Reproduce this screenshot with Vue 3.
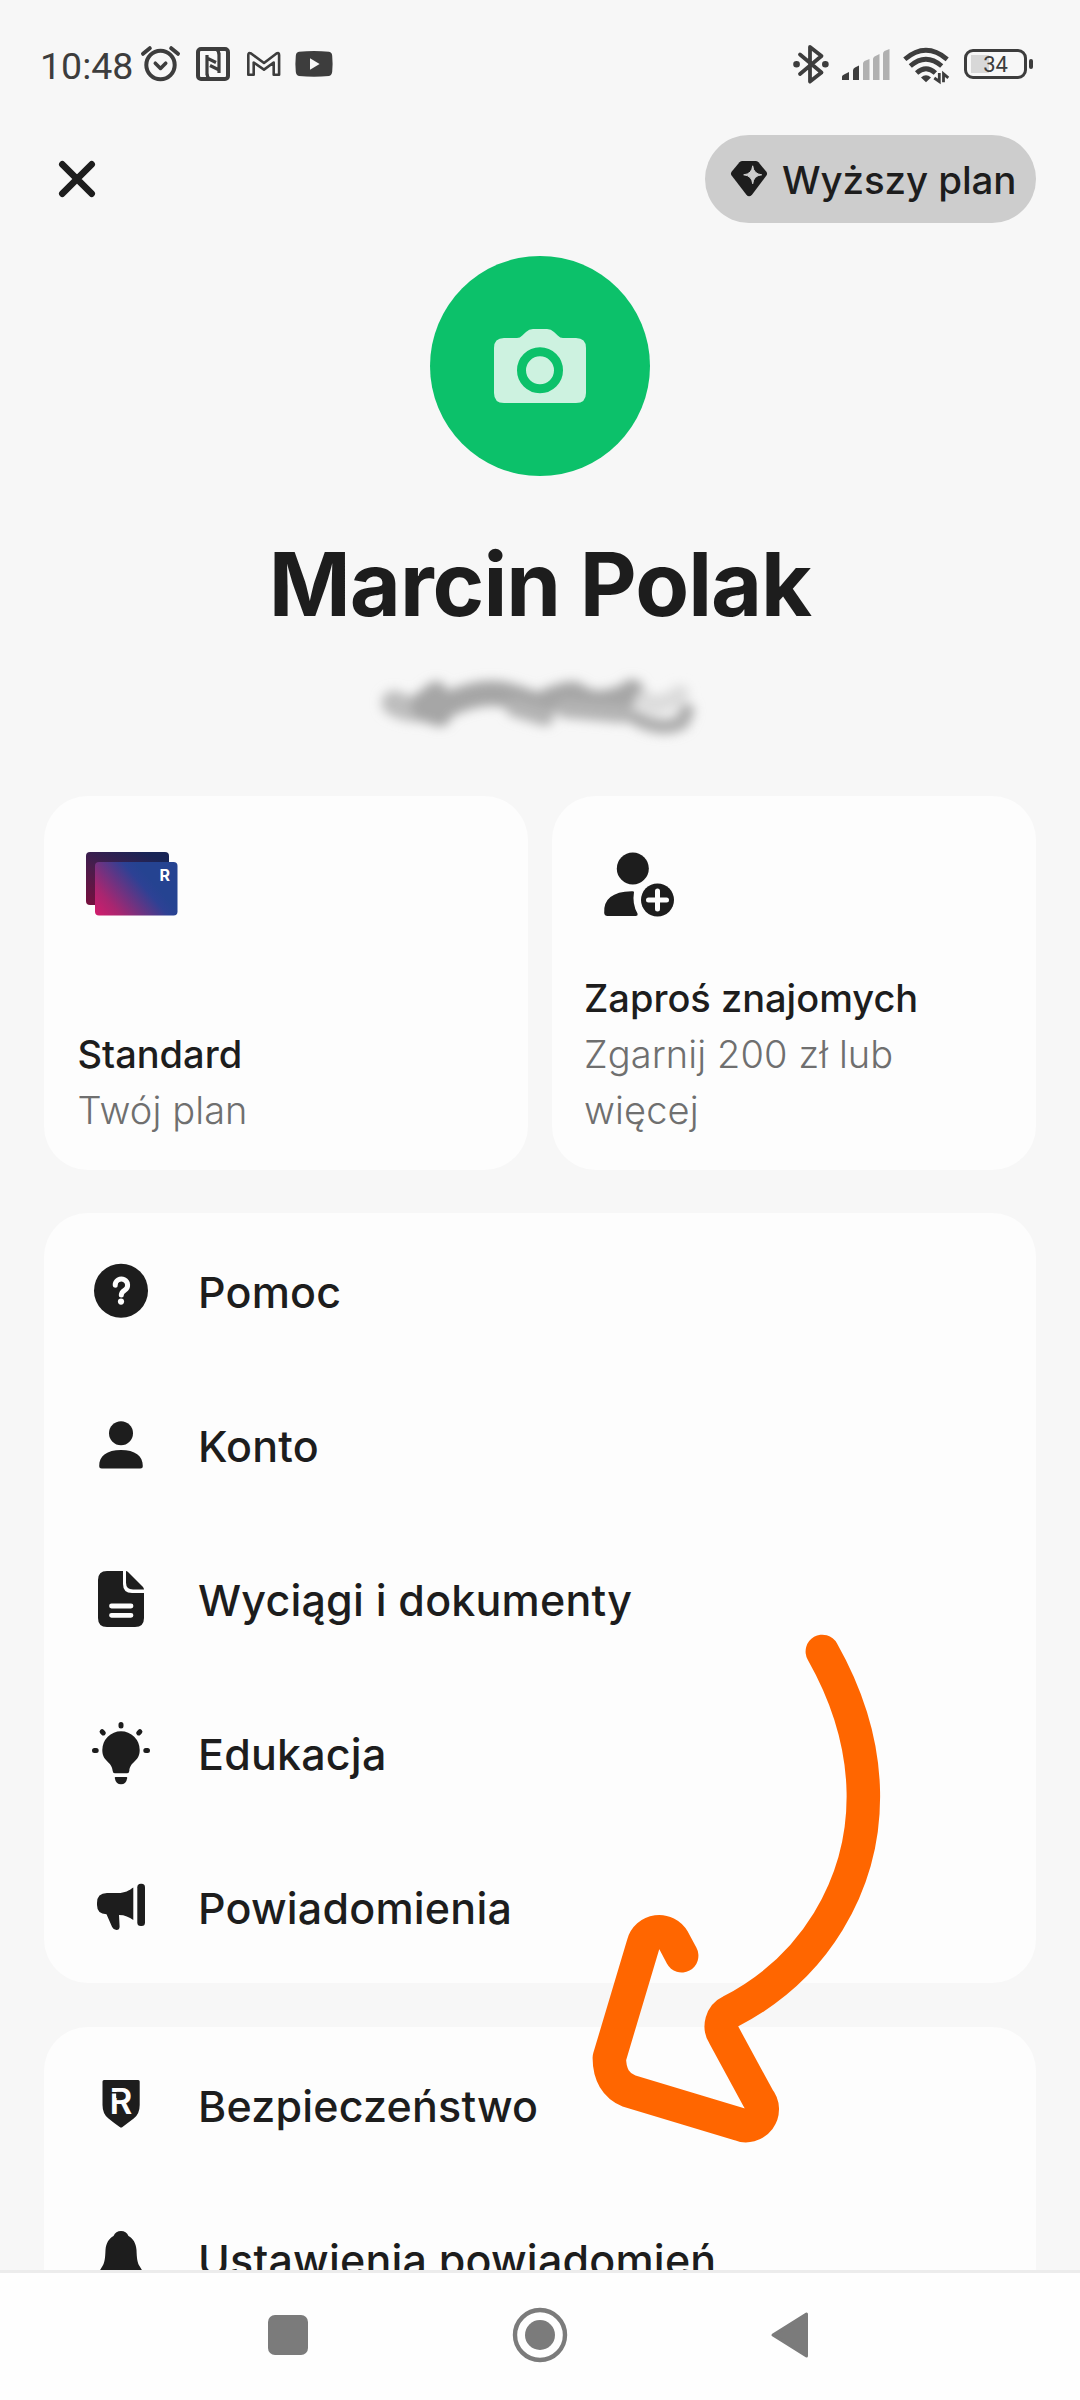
<script setup>
import { ref } from "vue";

const user = ref({ name: "Marcin Polak" });

const mainMenu = [
  { id: "help", label: "Pomoc" },
  { id: "account", label: "Konto" },
  { id: "documents", label: "Wyciągi i dokumenty" },
  { id: "education", label: "Edukacja" },
  { id: "news", label: "Powiadomienia" },
];

const settingsMenu = [
  { id: "security", label: "Bezpieczeństwo" },
  { id: "notifications", label: "Ustawienia powiadomień" },
];

const sections = ref([mainMenu, settingsMenu]);
</script>

<template>
  <div class="screen">
    <div class="status-bar">
      <span class="time">10:48</span>
      <svg class="status-left" width="196" height="44" viewBox="0 0 196 44" fill="none" stroke="#3d3d3d">
        <!-- alarm -->
        <circle cx="23.5" cy="24" r="14.2" stroke-width="4" />
        <path d="M18.3 22.2l5.2 5.2 5.2-5.2" stroke-width="3.6" stroke-linecap="round" stroke-linejoin="round" />
        <path d="M6 12.8l6.8-5.6M41 12.8l-6.8-5.6" stroke-width="4" stroke-linecap="round" />
        <!-- nfc -->
        <rect x="61" y="8" width="30" height="30" rx="3" stroke-width="4" />
        <path d="M70 14v18q0 4 2.500 6M82 32V14q0-4-2.500-6M70 34V17l9 4.500M82 12v17l-9-4.500" stroke-width="3.2" />
        <!-- gmail -->
        <path d="M111.3 33.7V14q0-3 2.800-1.500L127 22l12.500-9.500q2.600-1.500 2.600 1.500v19.700h-5.400V21.500L127 28.600l-10.300-7.100v12.200z" stroke-width="2.6" stroke-linejoin="round" />
        <!-- youtube -->
        <path d="M162 10.800q15-1.600 30 0 3 .6 3.200 4 .8 8 0 16-.3 3.600-3.200 4.200-15 1.600-30 0-3-.6-3.200-4.200-.8-8 0-16 .2-3.400 3.200-4z" fill="#3d3d3d" stroke="none" />
        <path d="M173 17.200v11.600l9.600-5.800z" fill="#f7f7f7" stroke="none" />
      </svg>
      <div class="status-right">
        <svg width="36" height="40" viewBox="0 0 36 40" fill="none" stroke="#3d3d3d" stroke-width="3.8" stroke-linecap="round" stroke-linejoin="round">
          <path d="M7 10.500L28.500 28.500 17 37.500V3L28.500 12 7 30" />
          <path d="M3.500 20.200h.1M32.300 20.200h.1" stroke-width="6.600" />
        </svg>
        <svg class="signal" width="48" height="32" viewBox="0 0 48 32">
          <path d="M0 31V27.500Q0 26 3 25l4-2V31zM11 31V21.500q0-2 2-3l4-2V31z" fill="#3d3d3d" />
          <path d="M21 31V14.500q0-1.500 1.500-2.500l5-2V31zM31 31V10q0-1.500 1.500-2.500l5-2.500V31zM41 31V5q0-2 1.500-3l5-2V31z" fill="#b0b0b0" />
        </svg>
        <svg class="wifi" width="47" height="36" viewBox="0 0 47 36" fill="none" stroke="#3d3d3d" stroke-width="4.800">
          <path d="M1.800 12.300q21-18 42.400 0M7.300 19q15.500-13.500 31.400 0M13.600 26q9.400-8.600 18.800 0" />
          <path d="M18 30.500q5-4.500 10 0l-5 4.800z" fill="#3d3d3d" stroke="none" />
          <path d="M36.300 26v8.500l-5-3.500M40.500 35.300v-8.500l4.800 4" stroke-width="2.800" />
        </svg>
        <div class="battery"><span>34</span></div>
      </div>
    </div>

    <header class="top-bar">
      <button class="close" aria-label="Zamknij">
        <svg width="36" height="36" viewBox="0 0 36 36">
          <path d="M3.300 3.300l29.400 29.400M32.700 3.300L3.300 32.700" stroke="#1d1d1d" stroke-width="6.600" stroke-linecap="round" />
        </svg>
      </button>
      <button class="upgrade">
        <svg width="36" height="36" viewBox="0 0 36 36">
          <path d="M11.500 0h13q1.800 0 3 1.200l7.700 9.400q1.600 2 .2 4L21 33.800q-3 3-5.600 0L.6 14.600q-1.400-2 .2-4L8.500 1.200Q9.700 0 11.500 0z" fill="#1d1d1d" />
          <path d="M21.700 4.800q.8 8.200 9 9-8.200.8-9 9-.8-8.200-9-9 8.200-.8 9-9z" fill="#cdcdcd" stroke="#cdcdcd" stroke-width="1" />
        </svg>
        <span>Wyższy plan</span>
      </button>
    </header>

    <main class="content">
      <div class="avatar">
        <svg width="92" height="74" viewBox="0 0 92 74">
          <path d="M10 9h13q3 0 5-2.200L32 3q3-3 7-3h14q4 0 7 3l4 3.800Q66 9 69 9h13q10 0 10 10v45q0 10-10 10H10Q0 74 0 64V19Q0 9 10 9z" fill="#cdf2e0" />
          <circle cx="46" cy="41.300" r="18.500" fill="none" stroke="#0cc16a" stroke-width="9" />
        </svg>
      </div>
      <h1>{{ user.name }}</h1>

      <!-- smudged-out user tag -->
      <svg class="hidden-tag" width="360" height="76" viewBox="0 0 360 76">
        <defs>
          <filter id="smudge" filterUnits="userSpaceOnUse" x="-30" y="-30" width="420" height="140">
            <feGaussianBlur stdDeviation="5.500" />
          </filter>
        </defs>
        <g filter="url(#smudge)" fill="none" stroke="#a6a6a6" stroke-linecap="round" stroke-linejoin="round">
          <path d="M34 37Q50 46 66 42" stroke-width="25" stroke="#bdbdbd" />
          <path d="M62 38L76 27 80 49 64 44" stroke-width="23" />
          <path d="M84 40Q118 24 142 28 160 32 178 40 200 28 214 28 230 40 248 36T272 26" stroke-width="25" />
          <path d="M155 42L185 51M205 43L262 48" stroke-width="18" stroke="#b4b4b4" />
          <path d="M284 34Q300 44 320 28" stroke-width="18" stroke="#dcdcdc" />
          <path d="M274 51q28 16 48 5l5-11" stroke-width="15" stroke="#adadad" />
        </g>
      </svg>

      <section class="tiles">
        <article class="tile">
          <svg class="tile-icon card-icon" width="100" height="70" viewBox="0 0 100 70">
            <defs>
              <linearGradient id="card-front" x1="0" y1="1" x2="0.800" y2="0.550">
                <stop offset="0" stop-color="#d41c6c" />
                <stop offset="0.300" stop-color="#a82670" />
                <stop offset="0.850" stop-color="#2d4194" />
                <stop offset="1" stop-color="#254391" />
              </linearGradient>
              <linearGradient id="card-back" x1="0" y1="1" x2="0.700" y2="0">
                <stop offset="0" stop-color="#780f3e" />
                <stop offset="0.500" stop-color="#4b1c4b" />
                <stop offset="1" stop-color="#182556" />
              </linearGradient>
            </defs>
            <rect x="7" y="8" width="83" height="53" rx="4" fill="url(#card-back)" />
            <rect x="16" y="18" width="82.500" height="53.500" rx="4" fill="url(#card-front)" />
            <text class="card-mark" x="80.500" y="36.500">R</text>
          </svg>
          <div class="tile-text">
            <strong>Standard</strong>
            <p>Twój plan</p>
          </div>
        </article>
        <article class="tile">
          <svg class="tile-icon" width="100" height="72" viewBox="0 0 100 72">
            <g fill="#1d1d1d">
              <circle cx="46.800" cy="24.500" r="16" />
              <path d="M48 48q-2 12 3.500 21.500.6 2.500-2 2.500H21.500q-3 0-3.300-3Q17 48 45.500 47.300q2.500-.3 2.500.7z" />
              <circle cx="71.500" cy="56" r="16.500" />
            </g>
            <path d="M71.500 47v18M62.500 56h18" stroke="#fdfdfd" stroke-width="5" stroke-linecap="round" />
          </svg>
          <div class="tile-text">
            <strong>Zaproś znajomych</strong>
            <p>Zgarnij 200 zł lub więcej</p>
          </div>
        </article>
      </section>

      <ul v-for="(items, index) in sections" :key="index" class="menu">
        <li v-for="item in items" :key="item.id">
          <svg width="60" height="60" viewBox="0 0 60 60" fill="#1d1d1d">
            <template v-if="item.id === 'help'">
              <circle cx="30" cy="30.700" r="27" />
              <path d="M24.200 25.200a6.200 6 0 1 1 9.600 4.900c-2.500 1.700-3.500 2.900-3.500 5" fill="none" stroke="#fdfdfd" stroke-width="5" stroke-linecap="round" />
              <circle cx="30" cy="41.600" r="3.100" fill="#fdfdfd" />
            </template>
            <template v-else-if="item.id === 'account'">
              <circle cx="30" cy="19.300" r="12" />
              <path d="M8.200 52C8 42 16 36 30 36s22 6 21.800 16q0 2.500-2.500 2.500H10.700q-2.500 0-2.500-2.500z" />
            </template>
            <template v-else-if="item.id === 'documents'">
              <path d="M16 3h16v13q0 9 9 9h12v25q0 9-9 9H16q-9 0-9-9V12q0-9 9-9z" />
              <path d="M35 3q1 0 2 1l14.500 14.500q1.500 1.500 1.500 3H42q-7 0-7-7z" />
              <path d="M20.500 38h19.500M20.500 47.300h19.500" stroke="#fdfdfd" stroke-width="4.800" stroke-linecap="round" />
            </template>
            <template v-else-if="item.id === 'education'">
              <path d="M30 9.300A18.700 18.700 0 0 0 11.300 28C11.300 40 21 39 21.700 49q.2 2.300 2 2.300h12.600q1.800 0 2-2.300C39 39 48.700 40 48.700 28A18.700 18.700 0 0 0 30 9.300z" />
              <path d="M24.500 55h11q.8 0 .7 1-1 6.300-6.200 6.300T23.800 56q-.1-1 .7-1z" />
              <path d="M30 2.500v1.400M3.500 28.600h1.700M54.800 28.600h1.700M11.100 9.700l1.200 1.200M48.900 9.700l-1.200 1.200" stroke="#1d1d1d" stroke-width="5" stroke-linecap="round" />
            </template>
            <template v-else-if="item.id === 'news'">
              <rect x="46.300" y="7.700" width="7.700" height="42.300" rx="3.500" />
              <path d="M16 17h11c7 0 11-2.500 15.300-5.500V44C38 41 34 39 28 39l.6 11.500q0 3.500-3.200 3.500-2.800 0-4.300-3L15.500 38.300Q6 38 6 29v-2Q6 17 16 17z" />
            </template>
            <template v-else-if="item.id === 'security'">
              <path d="M13 6h34.200q1.500 0 1.500 1.500V31q0 9-6 13.500-6 4.500-11.200 8.500-1.400 1-2.800 0Q23 49 17.500 44.500q-6-4.500-6-13.500V7.500Q11.500 6 13 6z" />
              <text class="shield-mark" x="30" y="40">R</text>
              <path d="M17 18.700h9V24" fill="none" stroke="#1d1d1d" stroke-width="1.500" />
            </template>
            <template v-else>
              <path d="M30 3c3.500 0 6 1.800 7.500 5 4.500 2.500 7.500 7 8 14 .3 8 .8 12.500 3 16l6 10H5.500l6-10c2.200-3.500 2.700-8 3-16 .5-7 3.500-11.500 8-14C24 4.800 26.500 3 30 3z" />
              <path d="M22 51h16q-1 7-8 7t-8-7z" />
            </template>
          </svg>
          <span>{{ item.label }}</span>
        </li>
      </ul>
    </main>

    <nav class="nav-bar">
      <svg width="40" height="40" viewBox="0 0 40 40">
        <rect width="40" height="40" rx="7" fill="#7b7b7b" />
      </svg>
      <svg class="home" width="54" height="54" viewBox="0 0 54 54">
        <circle cx="27" cy="27" r="25" fill="none" stroke="#7b7b7b" stroke-width="4.400" />
        <circle cx="27" cy="27" r="15" fill="#7b7b7b" />
      </svg>
      <svg width="38" height="46" viewBox="0 0 38 46">
        <path d="M35.500 2v42L2 23z" fill="#7b7b7b" stroke="#7b7b7b" stroke-width="3" stroke-linejoin="round" />
      </svg>
    </nav>

    <!-- hand-drawn arrow pointing at the security item -->
    <svg class="arrow" width="360" height="560" viewBox="0 0 1080 1568" preserveAspectRatio="none">
      <path
        d="M787 144C948 410 948 680 805 900 730 1015 630 1095 512 1152A49 46 0 0 0 492 1219L595 1396A49 46 0 0 1 538 1468L207 1375Q148 1352 148 1282L250 963A49 46 0 0 1 340 952L365 996"
        fill="none"
        stroke="#ff6600"
        stroke-width="33.500"
        stroke-linecap="round"
        stroke-linejoin="round"
        vector-effect="non-scaling-stroke"
      />
    </svg>
  </div>
</template>

<style>
body {
  margin: 0;
  background: #f7f7f7;
}
</style>

<style scoped>
.screen {
  position: relative;
  display: flex;
  flex-direction: column;
  width: 1080px;
  height: 2400px;
  overflow: hidden;
  background: #f7f7f7;
  color: #1d1d1d;
  font-family: Inter, "Liberation Sans", sans-serif;
}

svg {
  display: block;
  flex-shrink: 0;
  overflow: visible;
}

button {
  padding: 0;
  border: none;
  background: none;
  color: inherit;
  font-family: inherit;
}

.status-bar {
  display: flex;
  align-items: flex-start;
  box-sizing: border-box;
  height: 135px;
  padding: 41px 47px 0 40px;
}

.time {
  width: 97px;
  color: #3d3d3d;
  font-family: Roboto, sans-serif;
  font-size: 37.5px;
  line-height: 51px;
}

.status-right {
  display: flex;
  align-items: flex-start;
  margin-left: auto;
  padding-top: 3px;
}

.signal {
  margin: 5px 0 0 13px;
}

.wifi {
  margin: 3px 0 0 13px;
}

.battery {
  position: relative;
  display: flex;
  align-items: center;
  justify-content: center;
  box-sizing: border-box;
  width: 63px;
  height: 30px;
  margin: 5px 6px 0 14px;
  border: 3px solid #3d3d3d;
  border-radius: 9px;
  background: linear-gradient(90deg, #d8d8d8 18px, transparent 18px) 4px 3px / 50px 18px no-repeat;
}

.battery::after {
  content: "";
  position: absolute;
  top: 7px;
  right: -9px;
  width: 4px;
  height: 10px;
  border-radius: 2px;
  background: #3d3d3d;
}

.battery span {
  padding-top: 2px;
  color: #3d3d3d;
  font-family: Roboto, sans-serif;
  font-size: 22px;
  line-height: 24px;
}

.top-bar {
  display: flex;
  align-items: center;
  justify-content: space-between;
  height: 88px;
  padding: 0 44px 0 59px;
}

.upgrade {
  display: flex;
  align-items: center;
  gap: 15px;
  box-sizing: border-box;
  width: 331px;
  height: 88px;
  padding-left: 26px;
  border-radius: 44px;
  background: #cdcdcd;
  font-size: 38.5px;
  font-weight: 450;
  letter-spacing: -0.1px;
  white-space: nowrap;
}

.upgrade span {
  padding-top: 2px;
}

.content {
  display: flex;
  flex: 1;
  flex-direction: column;
  align-items: center;
  min-height: 0;
  padding-top: 33px;
  overflow: hidden;
}

.avatar {
  display: flex;
  align-items: center;
  justify-content: center;
  flex-shrink: 0;
  width: 220px;
  height: 220px;
  border-radius: 50%;
  background: #0cc16a;
}

h1 {
  flex-shrink: 0;
  margin: 56px 0 0;
  font-size: 88px;
  font-weight: 700;
  letter-spacing: -1px;
  line-height: 104px;
}

.hidden-tag {
  margin-top: 30px;
}

.tiles {
  display: grid;
  flex-shrink: 0;
  grid-template-columns: 1fr 1fr;
  gap: 24px;
  width: 992px;
  margin-top: 54px;
}

.tile {
  display: flex;
  flex-direction: column;
  justify-content: space-between;
  box-sizing: border-box;
  height: 374px;
  padding: 48px 32px 32px;
  border-radius: 44px;
  background: #fdfdfd;
}

.tile:first-child {
  padding-left: 33.5px;
}

.tile-icon {
  margin-left: 2px;
}

.card-icon {
  margin-left: 1.5px;
}

.tile-text {
  font-size: 38px;
  line-height: 56px;
}

.tile-text strong {
  display: block;
  font-weight: 450;
}

.tile-text p {
  width: 340px;
  margin: 0;
  color: #6f6f6f;
  font-weight: 350;
  letter-spacing: 0.1px;
}

.card-mark {
  fill: #fff;
  font-size: 16px;
  font-weight: 700;
}

.menu {
  flex-shrink: 0;
  width: 992px;
  margin: 43px 0 1px;
  padding: 0;
  border-radius: 44px;
  background: #fdfdfd;
  list-style: none;
}

.menu li {
  display: flex;
  align-items: center;
  gap: 47px;
  height: 154px;
  padding-left: 47px;
}

.menu span {
  padding-top: 3px;
  font-size: 43px;
  font-weight: 450;
  letter-spacing: 0.2px;
  line-height: 56px;
}

.shield-mark {
  fill: #fdfdfd;
  font-size: 35px;
  font-weight: 600;
  text-anchor: middle;
}

.nav-bar {
  display: flex;
  align-items: center;
  flex-shrink: 0;
  box-sizing: border-box;
  height: 130px;
  padding: 0 0 3px 268px;
  border-top: 3px solid #ececec;
  background: #fefefe;
}

.nav-bar .home {
  margin: 0 204px 0 205px;
}

.arrow {
  position: absolute;
  top: 1600px;
  left: 560px;
}
</style>
